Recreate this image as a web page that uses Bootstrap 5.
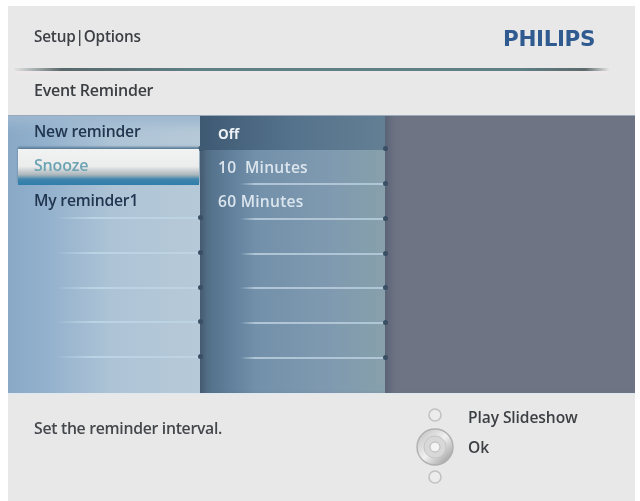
<!DOCTYPE html>
<html lang="en">
<head>
<meta charset="utf-8">
<title>Event Reminder</title>
<link rel="stylesheet" href="https://cdn.jsdelivr.net/npm/bootstrap@5.3.0/dist/css/bootstrap.min.css">
<style>
html,body{height:100%;overflow:hidden;background:#fff}
body{font-family:"Open Sans","Noto Sans",sans-serif;font-weight:600;color:#3c3f44;padding:6px 5px 0 8px}
.shell{height:495px;background:#e8e8e8;filter:blur(.55px)}
.top-bar{height:60px;padding:0 0 0 26px}
.top-title{font-size:15.3px;letter-spacing:-.2px;padding-top:2px}
.brand{font-family:"DejaVu Sans",sans-serif;font-weight:700;font-size:21.5px;letter-spacing:-.4px;color:#2f5b91;margin-right:40px;line-height:1;padding-top:5px}
.rule{height:3px;margin:2px 26px 0 6px;background:linear-gradient(90deg,#e4e4e4 0,#59686a 8%,#5d7f85 30%,#5d7f85 85%,#5e6a6c 96%,#e4e4e4 100%);box-shadow:0 3px 3px #f1e8ea}
.sub-title{height:44px;padding-left:26px;font-size:16px;letter-spacing:-.25px;color:#3b3e42;padding-bottom:5px}
.stage{height:280px;border-top:1px solid #9aa9b8}
.pane-a{width:192px;background:linear-gradient(90deg,#89a9c7 0,#93b1cd 20%,#aec4d6 55%,#b6c9d8 100%);box-shadow:inset 0 22px 12px -14px #9db7cf}
.pane-b{width:185px;background:linear-gradient(90deg,#4f6b83 0,#607f9a 16%,#7390aa 30%,#7f9ab0 70%,#87a0ab 100%);box-shadow:inset 8px 0 6px -5px #43586d}
.pane-c{background:#6f7485;box-shadow:inset 12px 0 10px -8px #566074}
.slot{height:34.75px;padding-left:26px;font-size:15.7px;letter-spacing:-.2px;position:relative;border-bottom:2px solid transparent;border-image:linear-gradient(90deg,transparent 25%,#bcd3e4 45%,#bcd3e4 98%,transparent 100%) 1}
.pane-a .slot{color:#21354f}
.pane-b .slot{padding-left:18px;color:#dbe5ee;font-size:15.6px;letter-spacing:.25px;border-image:linear-gradient(90deg,transparent 22%,#b0c5d6 30%,#b0c5d6 98%,transparent 100%) 1}
.slot.bare{border-image:none}
.pane-a .slot-on{margin:-1px 1px -1px 10px;padding-left:16px;padding-bottom:4px;font-size:16px;color:#6ba3b3;background:linear-gradient(180deg,#f1f2f2 0,#ececec 48%,#a9b5bb 72%,#3f85ad 84%,#2f7eaa 100%);height:36px;z-index:1;border:0;border-image:none;box-shadow:0 -2px 2px #5b7d99}
.pane-b .slot-head{background:linear-gradient(90deg,#3e5a73,#55728c 50%,#637f94);font-size:13.5px;font-weight:700;letter-spacing:0;color:#edf1f4;border-image:none;padding-top:4px}
.pane-b .slot-mid{padding-top:2px}
.knot::after{content:"";position:absolute;right:-3px;bottom:-3px;width:5px;height:5px;border-radius:50%;background:#3a4e64}
.foot{height:108px;padding:0 0 0 26px;border-top:2px solid #e3e8ec}
.hint{font-size:15.8px;letter-spacing:-.3px;padding-top:22px;color:#44474b}
.pad{margin-right:13px;margin-top:10px;margin-left:1px}
.legend{width:167px;font-size:15.6px;letter-spacing:-.1px;line-height:30px;margin-top:7px}
</style>
</head>
<body>
<main class="shell d-flex flex-column">
  <header class="top-bar d-flex justify-content-between align-items-center">
    <div class="top-title">Setup|Options</div>
    <div class="brand">PHILIPS</div>
  </header>
  <div class="rule"></div>
  <div class="sub-title d-flex align-items-center">Event Reminder</div>
  <section class="stage d-flex">
    <div class="pane-a flex-shrink-0">
      <div class="slot bare knot d-flex align-items-center">New reminder</div>
      <div class="slot slot-on d-flex align-items-center">Snooze</div>
      <div class="slot knot d-flex align-items-center">My reminder1</div>
      <div class="slot knot"></div>
      <div class="slot knot"></div>
      <div class="slot knot"></div>
      <div class="slot knot"></div>
    </div>
    <div class="pane-b flex-shrink-0">
      <div class="slot slot-head knot d-flex align-items-center">Off</div>
      <div class="slot slot-mid knot d-flex align-items-center">10&nbsp; Minutes</div>
      <div class="slot knot d-flex align-items-center">60 Minutes</div>
      <div class="slot knot"></div>
      <div class="slot knot"></div>
      <div class="slot knot"></div>
      <div class="slot knot"></div>
    </div>
    <div class="pane-c flex-grow-1"></div>
  </section>
  <footer class="foot d-flex align-items-start">
    <div class="hint flex-grow-1">Set the reminder interval.</div>
    <svg class="pad flex-shrink-0" width="40" height="84" viewBox="0 0 40 84" aria-hidden="true">
      <defs><linearGradient id="dial" x1="0" y1="0" x2="1" y2="1"><stop offset="0" stop-color="#bdbdbd"/><stop offset=".5" stop-color="#f0f0f0"/><stop offset="1" stop-color="#8f8f8f"/></linearGradient></defs>
      <circle cx="20" cy="10" r="6" fill="#ececec" stroke="#c2c2c2" stroke-width="1.6"/>
      <circle cx="20" cy="42" r="18" fill="url(#dial)" stroke="#b0b0b0" stroke-width="1.4"/>
      <circle cx="20" cy="42" r="11" fill="#d8d8d8" stroke="#c4c4c4"/>
      <circle cx="20" cy="42" r="5" fill="#f4f4f4" stroke="#b8b8b8"/>
      <circle cx="20" cy="72" r="6" fill="#ececec" stroke="#c2c2c2" stroke-width="1.6"/>
    </svg>
    <div class="legend flex-shrink-0">
      <div>Play Slideshow</div>
      <div>Ok</div>
    </div>
  </footer>
</main>
</body>
</html>
